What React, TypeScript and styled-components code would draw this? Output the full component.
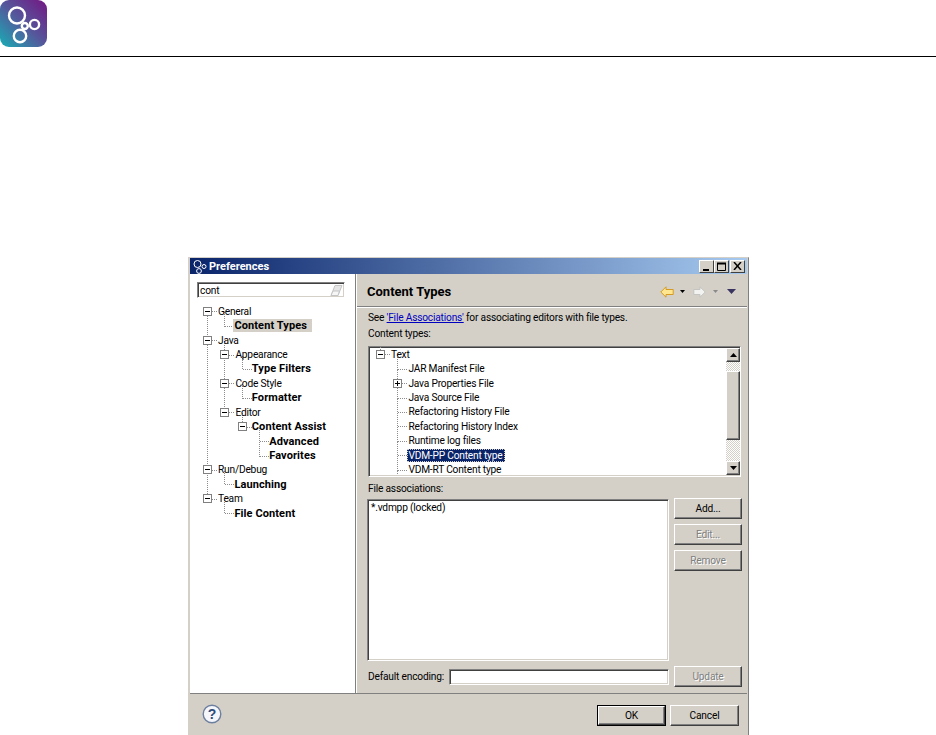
import React from 'react';
import styled, { createGlobalStyle, css } from 'styled-components';

const FACE = '#d4d0c8';
const INDENT = 17.4;

const GlobalStyle = createGlobalStyle`
  html, body {
    margin: 0;
    height: 100%;
    overflow: hidden;
    background: #fff;
  }
  body {
    font-family: Roboto, "Liberation Sans", Arial, sans-serif;
    font-size: 10.2px;
    letter-spacing: -0.2px;
    color: #000;
  }
`;

const TopBar = styled.header`
  height: 56px;
  border-bottom: 1px solid #000;
`;

const Dialog = styled.section`
  width: 557px;
  height: 477px;
  margin: 200px 0 0 188px;
  padding: 0 1px;
  display: flex;
  flex-direction: column;
  background: ${FACE};
  border: solid 1px;
  border-color: ${FACE} #808080 ${FACE} ${FACE};
`;

const TitleBar = styled.div`
  flex: none;
  height: 16px;
  padding: 0 2px 0 2px;
  display: flex;
  align-items: center;
  gap: 2px;
  color: #fff;
  font-size: 11px;
  font-weight: 700;
  letter-spacing: 0;
  background: linear-gradient(90deg, #0a246a, #a6caf0);
`;

const TitleText = styled.span`
  flex: 1;
`;

const WindowButton = styled.button<{ $gap: number }>`
  width: 15px;
  height: 13px;
  padding: 0;
  margin: 0 0 0 ${({ $gap }) => $gap - 2}px;
  display: flex;
  align-items: center;
  justify-content: center;
  background: ${FACE};
  border: solid 1px;
  border-color: #fff #404040 #404040 #fff;
`;

const Body = styled.div`
  flex: 1;
  min-height: 0;
  display: flex;
`;

const Sidebar = styled.aside`
  flex: none;
  width: 165px;
  background: #fff;
  border-right: 1px solid #808080;
  padding-top: 8px;
`;

const sunken = css`
  background: #fff;
  border: solid 1px;
  border-color: #808080 #fff #fff #808080;
  box-shadow: inset 1px 1px 0 #404040, inset -1px -1px 0 ${FACE};
`;

const FilterBox = styled.div`
  ${sunken}
  box-sizing: border-box;
  width: 148px;
  height: 16px;
  margin: 0 0 6px 7px;
  padding: 0 1px 0 2px;
  display: flex;
  align-items: center;
  justify-content: space-between;
`;

const TreeWrap = styled.div`
  position: relative;
  overflow: hidden;
`;

const Connectors = styled.svg`
  position: absolute;
  inset: 0;
  width: 100%;
  height: 100%;
`;

const Row = styled.div<{ $level: number; $origin: number; $height: number }>`
  position: relative;
  height: ${({ $height }) => $height}px;
  padding-left: ${({ $origin, $level }) => $origin + $level * INDENT}px;
  display: flex;
  align-items: center;
  white-space: nowrap;
`;

const Expander = styled.span<{ $plus: boolean }>`
  position: relative;
  flex: none;
  box-sizing: border-box;
  width: 9px;
  height: 9px;
  background: #fff;
  border: 1px solid #808080;

  &::before {
    content: '';
    position: absolute;
    left: 1px;
    top: 3px;
    width: 5px;
    height: 1px;
    background: #000;
  }

  ${({ $plus }) =>
    $plus &&
    css`
      &::after {
        content: '';
        position: absolute;
        left: 3px;
        top: 1px;
        width: 1px;
        height: 5px;
        background: #000;
      }
    `}
`;

const ExpanderSlot = styled.span`
  flex: none;
  width: 9px;
`;

const Label = styled.span<{ $bold?: boolean; $state?: 'hit' | 'selected' }>`
  height: 13px;
  line-height: 13px;
  margin-left: ${({ $bold }) => ($bold ? 4 : 5)}px;
  padding: 0 3px 0 1px;
  font-size: ${({ $bold }) => ($bold ? 11 : 10.2)}px;
  font-weight: ${({ $bold }) => ($bold ? 700 : 400)};
  letter-spacing: ${({ $bold }) => ($bold ? 0.1 : -0.2)}px;
  ${({ $state }) =>
    $state === 'hit' &&
    css`
      padding-right: 5px;
      background: ${FACE};
    `}
  ${({ $state }) =>
    $state === 'selected' &&
    css`
      background: #0a246a;
      color: #fff;
      outline: 1px dotted ${FACE};
      outline-offset: -1px;
    `}
`;

const Pane = styled.main`
  flex: 1;
  min-width: 0;
  display: flex;
  flex-direction: column;
  border-left: 1px solid #fff;
`;

const PaneHeader = styled.div`
  flex: none;
  box-sizing: border-box;
  height: 33px;
  padding: 3px 11px 0 10px;
  display: flex;
  align-items: center;
  border-bottom: 1px solid #808080;
  box-shadow: 0 1px 0 #fff;
`;

const PaneTitle = styled.h1`
  flex: 1;
  margin: 0;
  font-size: 13px;
  font-weight: 700;
  letter-spacing: 0;
`;

const NavIcons = styled.div`
  display: flex;
  align-items: center;
`;

const PaneContent = styled.div`
  flex: 1;
  min-height: 0;
  padding: 4px 5px 0 10px;
  display: flex;
  flex-direction: column;
`;

const TextLine = styled.div<{ $below?: number }>`
  flex: none;
  height: 14px;
  padding-left: 1px;
  line-height: 14px;
  margin-bottom: ${({ $below }) => $below ?? 0}px;
`;

const Link = styled.a`
  color: #0000c0;
  text-decoration: underline;
`;

const TypesBox = styled.div`
  ${sunken}
  flex: none;
  box-sizing: border-box;
  height: 131px;
  margin: 5px 1px 5px 1px;
  padding: 0 0 1px 1px;
  display: flex;
`;

const TreeArea = styled.div`
  flex: 1;
  min-width: 0;
`;

const ScrollBar = styled.div`
  flex: none;
  width: 14px;
  margin-top: 1px;
  display: flex;
  flex-direction: column;
`;

const raised = css`
  background: ${FACE};
  border: solid 1px;
  border-color: #fff #404040 #404040 #fff;
  box-shadow: inset -1px -1px 0 #808080;
`;

const ScrollArrow = styled.div`
  ${raised}
  flex: none;
  box-sizing: border-box;
  height: 14px;
  display: flex;
  align-items: center;
  justify-content: center;
`;

const ScrollTrack = styled.div<{ $size?: number }>`
  flex: ${({ $size }) => ($size ? `none` : 1)};
  height: ${({ $size }) => ($size ? `${$size}px` : 'auto')};
  background: repeating-conic-gradient(#fff 0 25%, ${FACE} 0 50%) 0 0 / 2px 2px;
`;

const ScrollThumb = styled.div`
  ${raised}
  flex: none;
  box-sizing: border-box;
  height: 69px;
`;

const AssocRow = styled.div`
  flex: none;
  height: 162px;
  margin-top: 3px;
  display: flex;
  gap: 5px;
`;

const AssocList = styled.div`
  ${sunken}
  box-sizing: border-box;
  width: 302px;
  padding: 1px 2px 1px 3px;
  line-height: 13px;
`;

const SideButtons = styled.div`
  display: flex;
  flex-direction: column;
  gap: 5px;
  margin-top: -1px;
`;

const PushButton = styled.button<{ $w?: number }>`
  ${raised}
  box-sizing: border-box;
  width: ${({ $w }) => $w ?? 68}px;
  height: 21px;
  padding: 0;
  font: inherit;
  letter-spacing: inherit;
  color: #000;

  &:disabled {
    color: #808080;
    text-shadow: 1px 1px 0 #fff;
  }
`;

const DefaultButton = styled(PushButton)`
  height: 19px;
  margin-top: 1px;
  outline: 1px solid #000;
`;

const EncodingRow = styled.div`
  flex: none;
  margin-top: 5px;
  display: flex;
  align-items: center;
`;

const EncodingLabel = styled.span`
  width: 82px;
  padding-left: 1px;
  box-sizing: border-box;
  white-space: nowrap;
`;

const EncodingInput = styled.div`
  ${sunken}
  box-sizing: border-box;
  width: 220px;
  height: 16px;
  margin-right: 5px;
`;

const Footer = styled.footer`
  flex: none;
  height: 42px;
  box-sizing: border-box;
  padding: 10px 8px 0 12px;
  display: flex;
  align-items: flex-start;
  justify-content: space-between;
  border-top: 1px solid #808080;
`;

const FooterButtons = styled.div`
  margin-top: 1px;
  display: flex;
  align-items: flex-start;
  gap: 5px;
`;

type TreeItem = {
  label: string;
  level: number;
  bold?: boolean;
  expander?: 'minus' | 'plus';
  state?: 'hit' | 'selected';
};

const preferenceItems: TreeItem[] = [
  { label: 'General', level: 0, expander: 'minus' },
  { label: 'Content Types', level: 1, bold: true, state: 'hit' },
  { label: 'Java', level: 0, expander: 'minus' },
  { label: 'Appearance', level: 1, expander: 'minus' },
  { label: 'Type Filters', level: 2, bold: true },
  { label: 'Code Style', level: 1, expander: 'minus' },
  { label: 'Formatter', level: 2, bold: true },
  { label: 'Editor', level: 1, expander: 'minus' },
  { label: 'Content Assist', level: 2, bold: true, expander: 'minus' },
  { label: 'Advanced', level: 3, bold: true },
  { label: 'Favorites', level: 3, bold: true },
  { label: 'Run/Debug', level: 0, expander: 'minus' },
  { label: 'Launching', level: 1, bold: true },
  { label: 'Team', level: 0, expander: 'minus' },
  { label: 'File Content', level: 1, bold: true },
];

const contentTypeItems: TreeItem[] = [
  { label: 'Text', level: 0, expander: 'minus' },
  { label: 'JAR Manifest File', level: 1 },
  { label: 'Java Properties File', level: 1, expander: 'plus' },
  { label: 'Java Source File', level: 1 },
  { label: 'Refactoring History File', level: 1 },
  { label: 'Refactoring History Index', level: 1 },
  { label: 'Runtime log files', level: 1 },
  { label: 'VDM-PP Content type', level: 1, state: 'selected' },
  { label: 'VDM-RT Content type', level: 1 },
];

// connector lines are worked out from the row levels
const connectorPaths = (items: TreeItem[], origin: number, rowH: number, scrolled: boolean) => {
  const centerY = (i: number) => Math.round(i * rowH + rowH / 2) + 0.5;
  const centerX = (level: number) => Math.round(origin + level * INDENT + 4) + 0.5;
  const parts: string[] = [];
  items.forEach((item, i) => {
    const x = centerX(item.level);
    let j = i - 1;
    while (j >= 0 && items[j].level > item.level) j--;
    if (j >= 0) parts.push(`M${x} ${centerY(j)}V${centerY(i)}`);
    parts.push(`M${x} ${centerY(i)}H${x + 10}`);
  });
  if (scrolled) {
    parts.push(`M${centerX(0)} 0V${centerY(0)}`);
    parts.push(`M${centerX(1)} ${centerY(items.length - 1)}V${items.length * rowH + 8}`);
  }
  return parts.join('');
};

const Tree: React.FC<{ items: TreeItem[]; origin: number; rowH: number; scrolled?: boolean }> = ({
  items,
  origin,
  rowH,
  scrolled = false,
}) => (
  <TreeWrap style={scrolled ? { height: '100%' } : undefined}>
    <Connectors aria-hidden="true">
      <path
        d={connectorPaths(items, origin, rowH, scrolled)}
        stroke="#8c8c8c"
        strokeDasharray="1 1"
        fill="none"
        shapeRendering="crispEdges"
      />
    </Connectors>
    {items.map((item) => (
      <Row key={item.label} $level={item.level} $origin={origin} $height={rowH}>
        {item.expander ? <Expander $plus={item.expander === 'plus'} /> : <ExpanderSlot />}
        <Label $bold={item.bold} $state={item.state}>
          {item.label}
        </Label>
      </Row>
    ))}
  </TreeWrap>
);

const Logo = () => (
  <svg width="47" height="47" viewBox="0 0 47 47" role="img" aria-label="logo">
    <defs>
      <linearGradient id="logoFill" x1="0" y1="1" x2="1" y2="0">
        <stop offset="0" stopColor="#17aeb5" />
        <stop offset="0.5" stopColor="#55579b" />
        <stop offset="1" stopColor="#741683" />
      </linearGradient>
    </defs>
    <rect width="47" height="47" rx="9" fill="url(#logoFill)" />
    <g fill="none" stroke="#fff" strokeWidth="2.4">
      <circle cx="17" cy="15.5" r="8" />
      <circle cx="34.5" cy="24.5" r="4.6" />
      <circle cx="24.8" cy="26" r="3" />
      <circle cx="20" cy="36" r="6.2" />
    </g>
  </svg>
);

const TitleIcon = () => (
  <svg width="15" height="15" viewBox="0 0 15 15" fill="none" stroke="#fff" strokeWidth="1">
    <circle cx="5.5" cy="5" r="3.5" />
    <circle cx="12" cy="7.5" r="2" />
    <circle cx="7" cy="12" r="2.4" />
  </svg>
);

const Eraser = () => (
  <svg width="13" height="13" viewBox="0 0 13 13">
    <path d="M5 1.5h7L8 11.5H1z" fill="#e6e6e6" stroke="#c4c4c4" />
    <path d="M3 7h6.5L8 11.5H1z" fill="#f6f6f6" stroke="#c4c4c4" />
  </svg>
);

const BackArrow = () => (
  <svg width="14" height="12" viewBox="0 0 14 12">
    <path d="M.8 6L6 .8V3.5h7.2v5H6v2.7z" fill="#fde68f" stroke="#d69a22" />
  </svg>
);

const ForwardArrow = () => (
  <svg width="13" height="12" viewBox="0 0 13 12" style={{ marginLeft: 8 }}>
    <path d="M12.2 6L7 .8V3.5H.8v5H7v2.7z" fill="#f2f2f0" stroke="#c4c4c0" />
  </svg>
);

const SmallDrop = ({ color, left }: { color: string; left: number }) => (
  <svg width="5" height="3" viewBox="0 0 5 3" style={{ marginLeft: left }}>
    <path d="M0 0h5L2.5 3z" fill={color} />
  </svg>
);

const MenuDrop = () => (
  <svg width="9" height="5" viewBox="0 0 9 5" style={{ marginLeft: 9 }}>
    <path d="M0 0h9L4.5 5z" fill="#3a3560" />
  </svg>
);

const HelpIcon = () => (
  <svg width="20" height="20" viewBox="0 0 20 20">
    <circle cx="10" cy="10" r="8.8" fill="#f4f6fa" stroke="#6d7f9f" strokeWidth="1.4" />
    <text x="10" y="15" textAnchor="middle" fontFamily="Liberation Sans" fontWeight="700" fontSize="14" fill="#2f4a7c">
      ?
    </text>
  </svg>
);

const Triangle = ({ down }: { down?: boolean }) => (
  <svg width="7" height="4" viewBox="0 0 7 4">
    <path d={down ? 'M0 0h7L3.5 4z' : 'M0 4h7L3.5 0z'} fill="#000" />
  </svg>
);

const App: React.FC = () => (
  <>
    <GlobalStyle />
    <TopBar>
      <Logo />
    </TopBar>
    <Dialog>
      <TitleBar>
        <TitleIcon />
        <TitleText>Preferences</TitleText>
        <WindowButton aria-label="Minimize" $gap={0}>
          <svg width="9" height="9" viewBox="0 0 9 9">
            <path d="M1 7h6v2H1z" fill="#000" />
          </svg>
        </WindowButton>
        <WindowButton aria-label="Maximize" $gap={0}>
          <svg width="9" height="9" viewBox="0 0 9 9" fill="none" stroke="#000">
            <path d="M.5 1.5h8v7h-8z" />
            <path d="M0 1.5h9" strokeWidth="2" />
          </svg>
        </WindowButton>
        <WindowButton aria-label="Close" $gap={1}>
          <svg width="9" height="8" viewBox="0 0 9 8" fill="none" stroke="#000" strokeWidth="1.5">
            <path d="M1 0l7 8M8 0L1 8" />
          </svg>
        </WindowButton>
      </TitleBar>
      <Body>
        <Sidebar>
          <FilterBox>
            <span>cont</span>
            <Eraser />
          </FilterBox>
          <Tree items={preferenceItems} origin={13} rowH={14.43} />
        </Sidebar>
        <Pane>
          <PaneHeader>
            <PaneTitle>Content Types</PaneTitle>
            <NavIcons>
              <BackArrow />
              <SmallDrop color="#000" left={6} />
              <ForwardArrow />
              <SmallDrop color="#8a8a8a" left={7} />
              <MenuDrop />
            </NavIcons>
          </PaneHeader>
          <PaneContent>
            <TextLine $below={2}>
              See <Link href="#">'File Associations'</Link> for associating editors with file types.
            </TextLine>
            <TextLine>Content types:</TextLine>
            <TypesBox>
              <TreeArea>
                <Tree items={contentTypeItems} origin={6} rowH={14.43} scrolled />
              </TreeArea>
              <ScrollBar>
                <ScrollArrow>
                  <Triangle />
                </ScrollArrow>
                <ScrollTrack $size={9} />
                <ScrollThumb />
                <ScrollTrack />
                <ScrollArrow>
                  <Triangle down />
                </ScrollArrow>
              </ScrollBar>
            </TypesBox>
            <TextLine>File associations:</TextLine>
            <AssocRow>
              <AssocList>*.vdmpp (locked)</AssocList>
              <SideButtons>
                <PushButton>Add...</PushButton>
                <PushButton disabled>Edit...</PushButton>
                <PushButton disabled>Remove</PushButton>
              </SideButtons>
            </AssocRow>
            <EncodingRow>
              <EncodingLabel>Default encoding:</EncodingLabel>
              <EncodingInput />
              <PushButton disabled>Update</PushButton>
            </EncodingRow>
          </PaneContent>
        </Pane>
      </Body>
      <Footer>
        <HelpIcon />
        <FooterButtons>
          <DefaultButton $w={67}>OK</DefaultButton>
          <PushButton $w={69}>Cancel</PushButton>
        </FooterButtons>
      </Footer>
    </Dialog>
  </>
);

export default App;
